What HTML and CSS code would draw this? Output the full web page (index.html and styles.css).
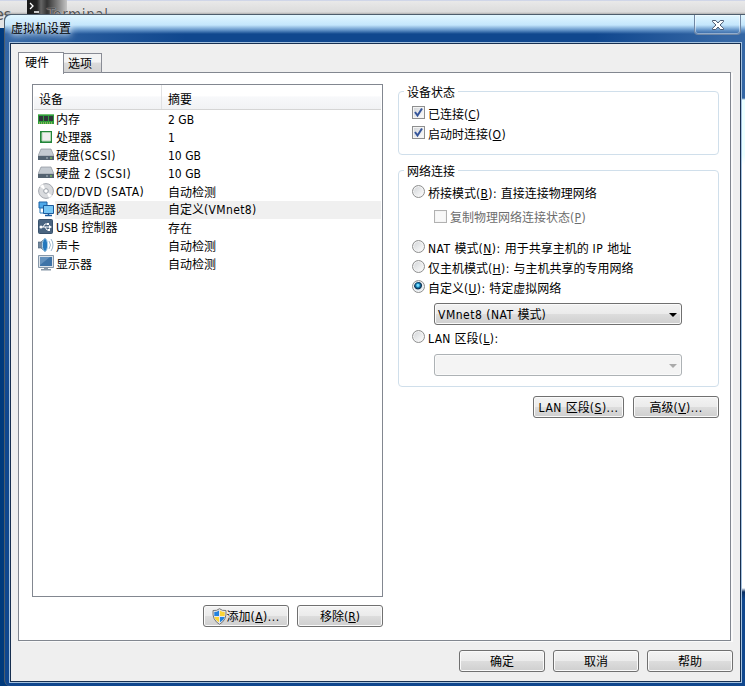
FILE: index.html
```html
<!DOCTYPE html>
<html lang="zh-CN">
<head>
<meta charset="utf-8">
<title>虚拟机设置</title>
<link rel="stylesheet" href="styles.css">
</head>
<body>
<div class="desktop">
  <div class="backbar"><span class="cut">es</span><span class="term"><svg width="40" height="20" viewBox="0 0 40 20"><defs><linearGradient id="tg"><stop offset="0" stop-color="#191919"/><stop offset=".25" stop-color="#222"/><stop offset=".35" stop-color="#666"/><stop offset=".5" stop-color="#333"/><stop offset=".8" stop-color="#888"/><stop offset="1" stop-color="#c4c4c4"/></linearGradient></defs><path d="M0 0h40v15H0z" fill="url(#tg)"/><path d="M3 3l3 3-3 3M7 12h5" fill="none" stroke="#fff" stroke-width="1.3"/></svg></span><span class="termtext">Terminal</span></div>
  <div class="window">
    <header class="title"><span class="caption">虚拟机设置</span><span class="close"><svg width="12" height="10" viewBox="0 0 12 10"><path d="M.5.5h3.3L6 3 8.2.5h3.3v1.2L8 5l3.500 3.300v1.200H8.200L6 7 3.800 9.500H.5V8.300L4 5 .5 1.700z" fill="#fff" stroke="#4b5970"/></svg></span></header>
    <main class="client">
      <nav class="tabs"><span class="tab on">硬件</span><span class="tab">选项</span></nav>
      <section class="page">
        <div class="left">
          <div class="list">
            <div class="head"><span class="c1">设备</span><span class="c2">摘要</span></div>
            <div class="row"><svg class="ic" viewBox="0 0 16 16"><path d="M0 3h16v10H0z" fill="#2e9c3c"/><path d="M1 5h4v5H1zM6 5h4v5H6zM11 5h4v5h-4z" fill="#30363a"/><path d="M0 3.500h16" stroke="#75c174"/><path d="M1 12h14" stroke="#e3d473" stroke-dasharray="1 1"/></svg><span class="name">内存</span><span>2 GB</span></div>
            <div class="row"><svg class="ic" viewBox="0 0 16 16"><path d="M2 2h12v12H2z" fill="#23863a"/><path d="M4 3.500h8.500V12H4z" fill="#eee" stroke="#b6d7b7"/></svg><span class="name">处理器</span><span>1</span></div>
            <div class="row"><svg class="ic" viewBox="0 0 16 16"><path d="M3 2h10l3 7H0z" fill="#c4cad1" stroke="#8c949c" stroke-width=".7"/><path d="M0 9h16v4H0z" fill="#536270"/><path d="M8 11h2" stroke="#aeb9c2"/><path d="M12 11h2" stroke="#8ae34b"/></svg><span class="name">硬盘<b>(SCSI)</b></span><span>10 GB</span></div>
            <div class="row"><svg class="ic" viewBox="0 0 16 16"><path d="M3 2h10l3 7H0z" fill="#c4cad1" stroke="#8c949c" stroke-width=".7"/><path d="M0 9h16v4H0z" fill="#536270"/><path d="M8 11h2" stroke="#aeb9c2"/><path d="M12 11h2" stroke="#8ae34b"/></svg><span class="name">硬盘<b> 2 (SCSI)</b></span><span>10 GB</span></div>
            <div class="row"><svg class="ic" viewBox="0 0 16 16"><circle cx="8" cy="8" r="7.400" fill="#d9dbde" stroke="#a4a8af"/><path d="M8 8L2 3.500 5 1zM8 8l6 4.500L11 15z" fill="#fff"/><circle cx="8" cy="8" r="2.300" fill="#fff" stroke="#9aa0a8"/></svg><span class="name"><b>CD/DVD (SATA)</b></span><span class="low">自动检测</span></div>
            <div class="row sel"><svg class="ic" viewBox="0 0 16 16"><path d="M1 1h8v6H1z" fill="#4ea8e8" stroke="#1d62a6"/><path d="M2 7v5h4" fill="none" stroke="#2b78b8"/><path d="M5.500 4.500h10v8h-10z" fill="#79c7f5" stroke="#1b5c9e"/><path d="M7 14.500h7M10.500 13v1" stroke="#1b5c9e" stroke-width="1.500"/></svg><span class="name">网络适配器</span><span>自定义<b class="s">(VMnet8)</b></span></div>
            <div class="row"><svg class="ic" viewBox="0 0 16 16"><rect x=".5" y=".5" width="14" height="14" rx="1" fill="#4a6581" stroke="#39526d"/><path d="M3 8h9M5 8l2-3h3M7 8l2 3h2" fill="none" stroke="#fff"/><path d="M11 6l3 2-3 2z" fill="#fff"/><circle cx="3" cy="8" r="1.500" fill="#fff"/><path d="M9 4h2v2H9zM10 10h2v2h-2z" fill="#fff"/></svg><span class="name">USB 控制器</span><span class="low">存在</span></div>
            <div class="row"><svg class="ic" viewBox="0 0 16 16"><path d="M0 5h3l4-4q3 7 0 14l-4-4H0z" fill="#73889d" stroke="#476077" stroke-width=".6"/><ellipse cx="7" cy="8" rx="2.600" ry="6.500" fill="#2378bd" stroke="#a7cfe9"/><path d="M11 4q3 4 0 8M13 2q4 6 0 12" fill="none" stroke="#9cb8d1"/></svg><span class="name low">声卡</span><span class="low">自动检测</span></div>
            <div class="row"><svg class="ic" viewBox="0 0 16 16"><path d="M.5.5h15v12H.5z" fill="#dce3ea" stroke="#8798a9"/><path d="M2 2h12v9H2z" fill="#3e73a7"/><path d="M2 2h10L2 10z" fill="#6391bd"/><path d="M6 13h4v1H6zM3 14h10v1.500H3z" fill="#8797a7"/></svg><span class="name low">显示器</span><span class="low">自动检测</span></div>
          </div>
          <div class="listbtns"><button><svg width="15" height="17" viewBox="0 0 15 17"><path d="M7.500.7Q10 3 14 2.500 15 12 7.500 16.300 0 12 1 2.500 5 3 7.500.7z" fill="#e8e8e8" stroke="#777"/><path d="M7 2.500V8H2.300V4Q5 4 7 2.500z" fill="#2382df"/><path d="M8 2.500V8h4.700V4Q10 4 8 2.500z" fill="#fbd536"/><path d="M7 9v5.200Q3 12 2.400 9z" fill="#fbd536"/><path d="M8 9v5.200Q12 12 12.600 9z" fill="#2382df"/></svg>添加<b>(<u>A</u>)...</b></button><button>移除(<u>R</u>)</button></div>
        </div>
        <div class="right">
          <div class="group state"><span class="legend">设备状态</span>
            <div class="opt"><i class="check"><svg viewBox="0 0 11 11"><path d="M2 5l2.500 3.500L9 1.500" fill="none" stroke="#35559a" stroke-width="2"/></svg></i><span>已连接(<u>C</u>)</span></div>
            <div class="opt"><i class="check"><svg viewBox="0 0 11 11"><path d="M2 5l2.500 3.500L9 1.500" fill="none" stroke="#35559a" stroke-width="2"/></svg></i><span>启动时连接<b class="s">(<u>O</u>)</b></span></div>
          </div>
          <div class="group net"><span class="legend">网络连接</span>
            <div class="opt"><i class="radio"></i><span>桥接模式<b class="s">(<u>B</u>): </b>直接连接物理网络</span></div>
            <div class="opt sub"><i class="check off"></i><span>复制物理网络连接状态<b class="s">(<u>P</u>)</b></span></div>
            <div class="opt nat"><i class="radio"></i><span><b>NAT </b>模式<b>(<u>N</u>): </b>用于共享主机的<b> IP </b>地址</span></div>
            <div class="opt"><i class="radio"></i><span>仅主机模式<b class="s">(<u>H</u>): </b>与主机共享的专用网络</span></div>
            <div class="opt"><i class="radio picked"></i><span>自定义<b class="s">(<u>U</u>): </b>特定虚拟网络</span></div>
            <div class="combo"><b>VMnet8 (NAT </b>模式<b>)</b><i class="arrow"></i></div>
            <div class="opt lan"><i class="radio"></i><span><b class="s">LAN </b>区段<b>(<u>L</u>):</b></span></div>
            <div class="combo disabled"><i class="arrow"></i></div>
          </div>
          <div class="netbtns"><button class="wide"><b>LAN </b>区段<b>(<u>S</u>)...</b></button><button><span>高级<b>(<u>V</u>)...</b></span></button></div>
        </div>
      </section>
      <footer class="actions"><button>确定</button><button>取消</button><button>帮助</button></footer>
    </main>
  </div>
</div>
</body>
</html>
```

FILE: styles.css
```css
* { box-sizing: border-box; }
body { margin: 0; width: 745px; height: 686px; overflow: hidden; background: #003a7c; color: #000; font: 12px/18px "DejaVu Sans Condensed", "Noto Sans CJK SC", sans-serif; }
b { font-weight: 400; letter-spacing: .5px; white-space: pre; }
b.s { letter-spacing: .35px; }
u { text-underline-offset: 1px; }
.desktop { position: relative; height: 686px; padding: 14px 0 0 4px; background: linear-gradient(#e4e4e4 0 28px, #003a7c 28px); }
.backbar { position: absolute; inset: 0 0 auto; height: 26px; background: linear-gradient(#d0d6e8 0 1px, #e9e9e9 1px, #dcdcdc 12px, #999 15px, transparent 15px); font: 16px/20px "DejaVu Sans Condensed", sans-serif; color: #555; }
.cut { position: absolute; left: -5px; top: 5px; }
.term { position: absolute; left: 27px; top: 0; }
.termtext { position: absolute; left: 47px; top: 5px; font-size: 15px; text-shadow: 0 0 1px #fff; letter-spacing: .6px; }
.window { position: relative; width: 741px; height: 672px; padding: 0 4px 5px 5px; border: 1px solid #4d5d6c; border-right: 0; border-bottom-width: 0; border-radius: 6px 0 0 6px; background: linear-gradient(#10478e00 0 83px, #eaffff 85px 140px, #fff 150px 573px, #0b2f62 577px, #10478e 584px) right / 3px 100% no-repeat, linear-gradient(#10478e00 60px, #10478e 400px), linear-gradient(90deg, #3567a5 0, #10478e 180px, #10478e 590px, #3567a5 720px); }
.title { display: flex; justify-content: space-between; align-items: flex-start; height: 28px; margin: 0 -4px 0 -5px; padding-left: 6px; border-radius: 6px 0 0; background: linear-gradient(#e2f7ff, #c4e6fc 10px, #6595c9 15px, transparent 19px); }
.caption { padding: 5px 3px 0 0; line-height: 19px; text-shadow: 0 0 5px #d8e8f5, 0 0 8px #d8e8f5, 0 0 10px #d8e8f5; }
.close { width: 47px; height: 20px; margin-right: 4px; border: 1px solid #7087a4; border-top: 0; border-radius: 0 0 4px 4px; display: grid; place-items: center; box-shadow: inset 0 0 0 1px #ffffff70; }
.client { height: 639px; width: 731px; padding: 8px 9px 0 7px; border: 1px solid #172f50; outline: 1px solid #a5c2df; background: #efefef; }
.tabs { display: flex; align-items: flex-end; height: 21px; position: relative; z-index: 1; }
.tab { width: 38px; height: 20px; padding: 1px 0 0 4px; border: 1px solid #898c95; border-left: 0; background: linear-gradient(#f4f4f4 45%, #dcdcdc 50%, #d2d2d2); }
.tab.on { width: 46px; height: 22px; margin-bottom: -1px; padding: 1px 0 0 6px; border: 1px solid #898c95; border-bottom: 0; background: #fff; }
.page { display: flex; gap: 15px; width: 713px; height: 569px; margin-top: -1px; padding: 11px 11px 0 13px; border: 1px solid #828790; background: #fff; box-shadow: 2px 1px #fafafa; }
.left { width: 351px; flex: none; }
.list { height: 513px; border: 1px solid #828790; padding: 0 1px; }
.head { display: flex; height: 25px; margin-bottom: 1px; border-bottom: 1px solid #d5d5d5; background: linear-gradient(#fff 45%, #f7f8fa 50%, #f1f2f4); line-height: 30px; }
.c1 { width: 128px; height: 24px; padding-left: 5px; border-right: 1px solid #e0e1e3; }
.c2 { padding-left: 6px; }
.row { display: flex; height: 18px; padding-left: 4px; line-height: 18px; }
.low { padding-top: 1px; }
.ic { width: 16px; height: 16px; flex: none; }
.name { width: 113px; padding-left: 1px; margin-left: 1px; }
.row span:last-child { flex: 1; }
.sel span { background: #f0f0f0; }
.listbtns { display: flex; justify-content: flex-end; gap: 8px; margin-top: 8px; }
button { display: flex; align-items: center; justify-content: center; width: 86px; height: 22px; padding: 2px 0 0; border: 1px solid #707070; border-radius: 3px; background: linear-gradient(#f3f3f3, #ebebeb 49%, #dddddd 50%, #cfcfcf); box-shadow: inset 0 0 0 1px #fafafa; color: #000; font: inherit; white-space: pre; }
.listbtns svg { margin: -2px -1px 0 0; }
.right { width: 321px; flex: none; padding-top: 7px; }
.group { position: relative; border: 1px solid #d0dfeb; border-radius: 4px; padding: 13px 0 0 13px; }
.state { height: 64px; }
.net { height: 217px; margin-top: 15px; padding-top: 13px; }
.legend { position: absolute; left: 5px; top: -8px; padding: 0 3px; background: #fff; line-height: 18px; }
.opt { display: flex; height: 20px; gap: 3px; line-height: 20px; white-space: pre; }
.sub { margin: 4px 0 0 22px; color: #6d6d6d; }
.nat { margin-top: 11px; }
.check, .radio { width: 13px; height: 13px; flex: none; margin-top: 2px; border: 1px solid #8e8f8f; background: linear-gradient(135deg, #d0d3d6, #fff); box-shadow: inset 0 0 0 1px #f4f4f4; }
.state .check { margin-top: 1px; }
.check svg { display: block; width: 11px; height: 11px; }
.check.off { border-color: #b1b1b1; background: #f8f8f8; }
.radio { border-radius: 50%; margin-top: 1px; }
.picked { background: radial-gradient(circle at 45% 40%, #75dcff 0 1px, #1682b8 2px, #0b2c4d 3.500px, #e3ebf1 4.500px); }
.combo { position: relative; width: 248px; height: 22px; margin: 4px 0 0 22px; padding: 1px 0 0 3px; border: 1px solid #707070; border-radius: 3px; background: linear-gradient(#f2f2f2, #ebebeb 49%, #ddd 50%, #cfcfcf); line-height: 21px; box-shadow: inset 0 0 0 1px #fafafa; }
.arrow { position: absolute; right: 4px; top: 9px; border: 4px solid transparent; border-top-color: #000; border-bottom: 0; }
.lan { margin-top: 4px; }
.disabled { margin-top: 5px; border-color: #adb2b5; background: #f4f4f4; }
.disabled .arrow { border-top-color: #aaa; }
.netbtns { display: flex; justify-content: flex-end; gap: 9px; margin-top: 9px; }
.netbtns .wide { width: 91px; }
.actions { display: flex; justify-content: flex-end; gap: 8px; margin: 9px -9px 0 0; padding-right: 7px; }
```
